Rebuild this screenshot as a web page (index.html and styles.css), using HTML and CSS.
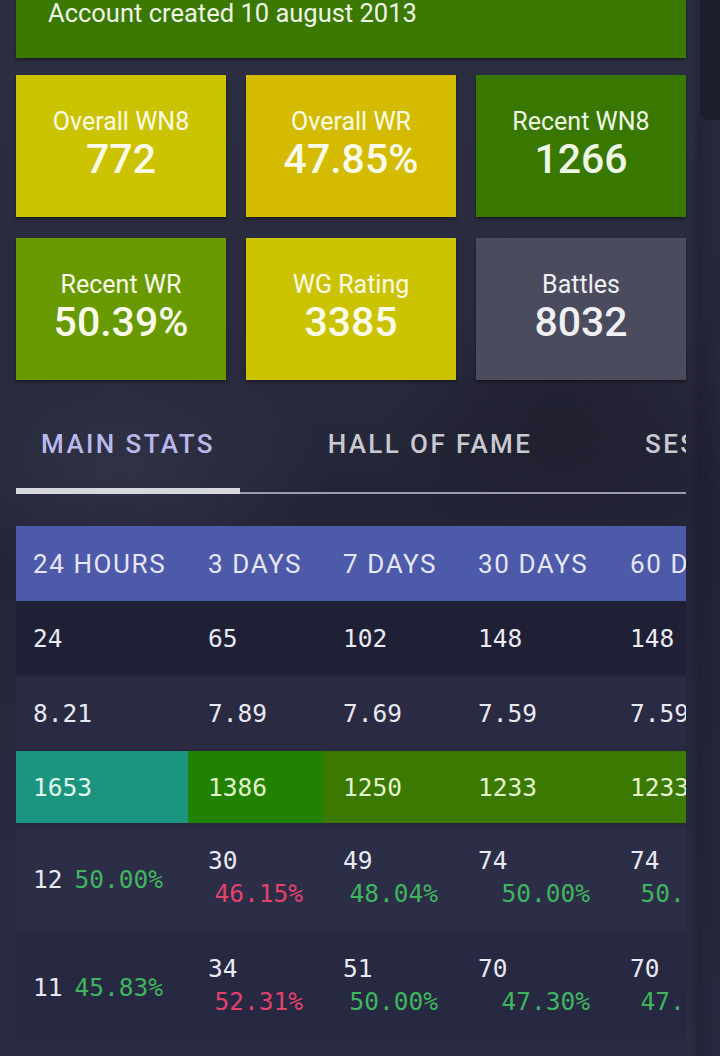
FILE: index.html
```html
<!DOCTYPE html>
<html>
<head>
<meta charset="utf-8">
<link rel="stylesheet" href="styles.css">
</head>
<body>
<div class="scroll-thumb"></div>
<div class="page">
  <div class="banner">Account created 10 august 2013</div>

  <div class="cards">
    <div class="card c-yellow"><div class="lbl">Overall WN8</div><div class="val">772</div></div>
    <div class="card c-gold"><div class="lbl">Overall WR</div><div class="val">47.85%</div></div>
    <div class="card c-green"><div class="lbl">Recent WN8</div><div class="val">1266</div></div>
    <div class="card c-lime"><div class="lbl">Recent WR</div><div class="val">50.39%</div></div>
    <div class="card c-yellow"><div class="lbl">WG Rating</div><div class="val">3385</div></div>
    <div class="card c-gray"><div class="lbl">Battles</div><div class="val">8032</div></div>
  </div>

  <div class="tabs">
    <div class="tab-row">
      <div class="tab tab1 active">MAIN STATS</div>
      <div class="tab tab2">HALL OF FAME</div>
      <div class="tab tab3">SESSIONS</div>
    </div>
    <div class="tab-track">
      <div class="track-active"></div>
      <div class="track-rest"></div>
    </div>
  </div>

  <div class="table">
    <div class="tr head">
      <div class="td">24 HOURS</div>
      <div class="td">3 DAYS</div>
      <div class="td">7 DAYS</div>
      <div class="td">30 DAYS</div>
      <div class="td">60 DAYS</div>
    </div>
    <div class="tr mono r1">
      <div class="td">24</div>
      <div class="td">65</div>
      <div class="td">102</div>
      <div class="td">148</div>
      <div class="td">148</div>
    </div>
    <div class="tr mono r2">
      <div class="td">8.21</div>
      <div class="td">7.89</div>
      <div class="td">7.69</div>
      <div class="td">7.59</div>
      <div class="td">7.59</div>
    </div>
    <div class="tr mono r3">
      <div class="td teal">1653</div>
      <div class="td dgreen">1386</div>
      <div class="td lgreen">1250</div>
      <div class="td lgreen">1233</div>
      <div class="td lgreen">1233</div>
    </div>
    <div class="tr mono tall r4">
      <div class="td inline">12 <span class="up">50.00%</span></div>
      <div class="td stack"><span class="n">30</span><span class="down">46.15%</span></div>
      <div class="td stack"><span class="n">49</span><span class="up">48.04%</span></div>
      <div class="td stack"><span class="n">74</span><span class="up">50.00%</span></div>
      <div class="td stack"><span class="n">74</span><span class="up">50.00%</span></div>
    </div>
    <div class="tr mono tall r5">
      <div class="td inline">11 <span class="up">45.83%</span></div>
      <div class="td stack"><span class="n">34</span><span class="down">52.31%</span></div>
      <div class="td stack"><span class="n">51</span><span class="up">50.00%</span></div>
      <div class="td stack"><span class="n">70</span><span class="up">47.30%</span></div>
      <div class="td stack"><span class="n">70</span><span class="up">47.30%</span></div>
    </div>
  </div>
</div>
</body>
</html>
```

FILE: styles.css
```css
html, body {
  margin: 0;
  padding: 0;
}
body {
  width: 720px;
  height: 1056px;
  overflow: hidden;
  font-family: Roboto, "Liberation Sans", sans-serif;
  color: #fff;
  background:
    linear-gradient(90deg, rgba(0,0,0,0) 0, rgba(0,0,0,0) 690px, rgba(12,12,22,0.25) 700px, rgba(30,31,46,0.2) 720px),
    radial-gradient(ellipse 300px 160px at 120px 470px, rgba(70,72,95,0.35), rgba(0,0,0,0) 70%),
    radial-gradient(ellipse 260px 200px at 560px 420px, rgba(20,20,34,0.45), rgba(0,0,0,0) 70%),
    linear-gradient(180deg, #2c2e41 0%, #292a3d 35%, #232436 48%, #27283c 70%, #2b2c43 100%);
}
.scroll-thumb {
  position: fixed;
  right: 0;
  top: 0;
  width: 20px;
  height: 120px;
  background: #1d1e2c;
  border-bottom-left-radius: 8px;
}
.page {
  width: 670px;
  margin-left: 16px;
}
.banner {
  height: 58px;
  background: #3a7800;
  box-sizing: border-box;
  padding-left: 32px;
  font-size: 25.5px;
  line-height: 26px;
  color: #eef5e6;
  box-shadow: 0 2px 3px rgba(0,0,0,0.35);
}
.cards {
  margin-top: 17px;
  display: grid;
  grid-template-columns: 210px 210px 210px;
  column-gap: 20px;
  row-gap: 21px;
}
.card {
  height: 142px;
  display: flex;
  flex-direction: column;
  align-items: center;
  justify-content: center;
  box-shadow: 0 2px 3px rgba(0,0,0,0.4);
  color: #fbfbea;
}
.card .lbl {
  font-size: 25px;
  line-height: 28px;
  margin-top: -2px;
}
.card .val {
  font-size: 41px;
  font-weight: 500;
  line-height: 46px;
}
.c-yellow { background: #cbc300; }
.c-gold { background: #d4bb00; }
.c-green { background: #397800; color: #eef6e4; }
.c-lime { background: #689a00; }
.c-gray { background: #4a4b5d; color: #f0f0f4; }

.tabs {
  margin-top: 44px;
  overflow: hidden;
}
.tab-row {
  display: flex;
  height: 40px;
  align-items: center;
  white-space: nowrap;
}
.tab {
  font-size: 26px;
  font-weight: 500;
  letter-spacing: 2.4px;
  color: #c9c9d0;
  flex: none;
}
.tab1 { width: 224px; text-align: center; color: #b9b9ee; }
.tab2 { width: 380px; text-align: center; }
.tab3 { padding-left: 25px; }
.tab-track {
  margin-top: 24px;
  display: flex;
  align-items: flex-end;
  height: 6px;
}
.track-active {
  width: 224px;
  height: 6px;
  background: #d7d7de;
  flex: none;
}
.track-rest {
  flex: 1;
  height: 2px;
  background: #9a9bab;
}

.table {
  margin-top: 32px;
  overflow: hidden;
}
.tr {
  display: grid;
  grid-template-columns: 172px 135px 135px 152px 139px;
  height: 74px;
  margin-bottom: 2px;
  white-space: nowrap;
}
.td {
  display: flex;
  align-items: center;
  padding: 0 20px;
  box-sizing: border-box;
  overflow: hidden;
}
.td:first-child { padding-left: 17px; }
.head {
  height: 75px;
  background: #4c5aa9;
  margin-bottom: 0;
  font-size: 26px;
  letter-spacing: 1.6px;
  color: #e6e6f4;
}
.mono {
  font-family: "DejaVu Sans Mono", "Liberation Mono", monospace;
  font-size: 24.5px;
  color: #e9e9f1;
}
.r1 { background: #1f2036; }
.r2 { background: #2a2b43; height: 72px; }
.r3 { height: 72px; margin-bottom: 4px; color: #e2f4cc; }
.teal { background: #1b9580; color: #e4f6ee; }
.dgreen { background: #238100; }
.lgreen { background: #3b7900; }
.tall { height: 104px; }
.r4 { background: #2c2d47; margin-bottom: 4px; }
.r5 { background: #272841; }
.inline .up { margin-left: 12px; }
.stack {
  flex-direction: column;
  align-items: stretch;
  justify-content: center;
  padding-bottom: 4px;
}
.stack span {
  display: block;
  line-height: 33px;
}
.stack .up, .stack .down { text-align: right; }
.up { color: #3fb65e; }
.down { color: #e3426d; }
```
